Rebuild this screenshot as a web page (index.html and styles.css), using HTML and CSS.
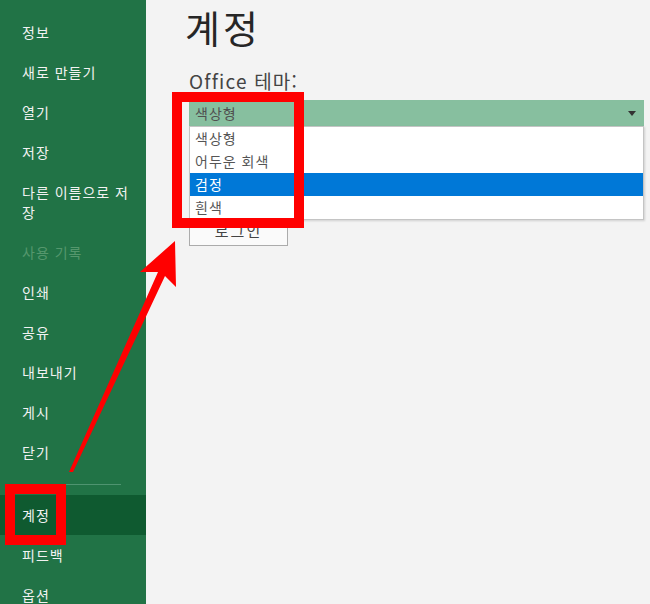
FILE: index.html
```html
<!DOCTYPE html>
<html lang="ko">
<head>
<meta charset="utf-8">
<title>계정</title>
<link rel="stylesheet" href="styles.css">
</head>
<body>
<div class="app">
  <nav class="sidebar">
    <div class="item">정보</div>
    <div class="item">새로 만들기</div>
    <div class="item">열기</div>
    <div class="item">저장</div>
    <div class="item">다른 이름으로 저장</div>
    <div class="item disabled">사용 기록</div>
    <div class="item">인쇄</div>
    <div class="item">공유</div>
    <div class="item">내보내기</div>
    <div class="item">게시</div>
    <div class="item">닫기</div>
    <div class="divider"></div>
    <div class="item selected">계정</div>
    <div class="item">피드백</div>
    <div class="item">옵션</div>
  </nav>
  <main class="main">
    <h1 class="title">계정</h1>
    <div class="label">Office 테마:</div>
    <div class="combo-wrap">
      <div class="combo">
        <span class="combo-value">색상형</span>
        <span class="caret"></span>
      </div>
      <ul class="listbox">
        <li class="opt">색상형</li>
        <li class="opt">어두운 회색</li>
        <li class="opt active">검정</li>
        <li class="opt">흰색</li>
      </ul>
    </div>
    <button class="signin">로그인</button>
  </main>
</div>
<div class="mark mark-combo"></div>
<div class="mark mark-account"></div>
<svg class="arrow" width="650" height="604" viewBox="0 0 650 604">
  <polygon points="175,241 176,287 165,276 73,472 69,472 158,272 140,272" fill="#ff0000"/>
</svg>
</body>
</html>
```
FILE: styles.css
```css
* { box-sizing: border-box; }
html, body {
  margin: 0;
  padding: 0;
  width: 650px;
  height: 604px;
  overflow: hidden;
  background: #f3f3f3;
  font-family: "Noto Sans CJK KR", "Noto Sans", sans-serif;
}
.app {
  display: flex;
  height: 604px;
}
.sidebar {
  width: 146px;
  flex: none;
  background: #217346;
  padding-top: 12px;
  display: flex;
  flex-direction: column;
}
.item {
  color: #f2f2f2;
  font-size: 14px;
  letter-spacing: 1px;
  line-height: 20px;
  padding: 10px 11px 10px 22px;
  flex: none;
}
.item.disabled { color: #55976d; }
.item.selected { background: #0f5a30; }
.divider {
  height: 1px;
  background: #4f9470;
  margin: 12px 25px 10px 22px;
  flex: none;
}
.main {
  flex: 1;
  padding: 5px 6px 0 43px;
  display: flex;
  flex-direction: column;
  align-items: flex-start;
}
.title {
  margin: 0 0 0 -4px;
  font-size: 38px;
  letter-spacing: 3px;
  font-weight: 400;
  line-height: 44px;
  color: #262626;
}
.label {
  margin-top: 21px;
  font-size: 19px;
  letter-spacing: 1.2px;
  line-height: 22px;
  color: #444;
}
.combo-wrap {
  position: relative;
  margin-top: 8px;
  width: 455px;
}
.combo {
  height: 26px;
  background: #87bf9f;
  display: flex;
  align-items: center;
  justify-content: space-between;
  padding: 0 8px 0 6px;
}
.combo-value {
  font-size: 14px;
  letter-spacing: 1px;
  color: #505050;
}
.caret {
  width: 0;
  height: 0;
  border-left: 4.5px solid transparent;
  border-right: 4.5px solid transparent;
  border-top: 5px solid #333;
  margin-top: 1px;
}
.listbox {
  position: absolute;
  left: 0;
  top: 26px;
  width: 455px;
  margin: 0;
  padding: 0;
  list-style: none;
  background: #fff;
  border: 1px solid #c4c4c4;
  box-shadow: 1px 1px 2px rgba(0,0,0,0.15);
  z-index: 2;
}
.opt {
  height: 23px;
  line-height: 23px;
  padding-left: 5px;
  font-size: 14px;
  letter-spacing: 1px;
  color: #555;
}
.opt.active {
  background: #0078d7;
  color: #fff;
}
.signin {
  margin-top: 88px;
  width: 99px;
  height: 32px;
  background: #fafafa;
  border: 1px solid #ababab;
  font-family: inherit;
  font-size: 15px;
  letter-spacing: 2px;
  color: #444;
  padding: 0;
}
.mark {
  position: absolute;
  border: 10px solid #ff0000;
  z-index: 5;
}
.mark-combo {
  left: 172px;
  top: 92px;
  width: 132px;
  height: 136px;
}
.mark-account {
  left: 5px;
  top: 484px;
  width: 61px;
  height: 61px;
}
.arrow {
  position: absolute;
  left: 0;
  top: 0;
  pointer-events: none;
  z-index: 6;
}
```
